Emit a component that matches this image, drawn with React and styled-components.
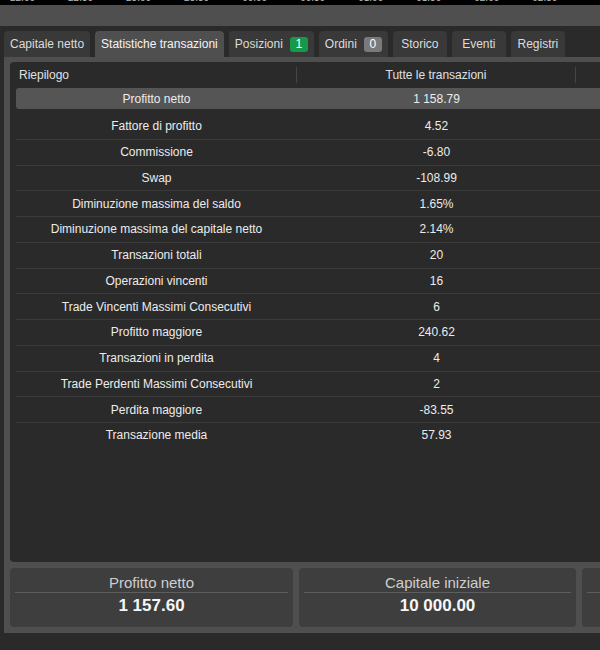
import React from 'react'
import styled, { createGlobalStyle } from 'styled-components'

const Global = createGlobalStyle`
  html, body {
    margin: 0;
    padding: 0;
    background: #2a2a2a;
    overflow: hidden;
  }
  body {
    font-family: "Liberation Sans", Arial, sans-serif;
    color: #e6e6e6;
  }
`

const Page = styled.div`
  width: 600px;
  height: 650px;
  overflow: hidden;
  background: #2a2a2a;
`

// chart time axis, only the bottom of its labels peeks out
const Ticker = styled.div`
  height: 5px;
  background: #000;
  overflow: hidden;
  display: flex;
  gap: 33px;
  padding-left: 10px;
  font-size: 10px;
  line-height: 10px;
  color: #bbb;

  span {
    display: block;
    transform: translateY(-7px);
  }
`

const TopBar = styled.div`
  height: 21px;
  background: #4f4f4f;
`

const Tabs = styled.div`
  display: flex;
  gap: 5px;
  padding: 5px 0 0 4px;
  height: 26px;
`

const Tab = styled.div`
  height: 26px;
  min-width: 54px;
  padding: 0 6px;
  display: flex;
  align-items: center;
  justify-content: center;
  gap: 7px;
  font-size: 12px;
  color: ${p => (p.active ? '#f4f4f4' : '#dcdcdc')};
  background: ${p => (p.active ? '#4f4f4f' : '#393939')};
  border-radius: 4px 4px 0 0;
  box-sizing: border-box;
  white-space: nowrap;
`

const Badge = styled.span`
  display: inline-block;
  min-width: 18px;
  height: 15px;
  line-height: 15px;
  text-align: center;
  border-radius: 3px;
  font-size: 12px;
  color: #fff;
  background: ${p => p.tone === 'green' ? '#16994a' : '#7a7a7a'};
`

const Panel = styled.div`
  width: 720px;
  margin-left: 4px;
  background: #4f4f4f;
  padding: 5px 6px 6px;
  box-sizing: border-box;
  display: flex;
  flex-direction: column;
  gap: 6px;
`

const TableBox = styled.div`
  height: 500px;
  background: #2a2a2a;
  border-radius: 4px;
  padding: 0 0 0 6px;
  box-sizing: border-box;
`

const HeaderRow = styled.div`
  display: grid;
  grid-template-columns: 281px 279px 1fr;
  height: 26px;
  align-items: center;
  font-size: 12px;
  color: #e0e0e0;
`

const HeadCell = styled.div`
  height: 16px;
  line-height: 16px;
  text-align: ${p => p.left ? 'left' : 'center'};
  padding-left: ${p => p.left ? '3px' : '0'};
  border-right: 1px solid #454545;
`

const Row = styled.div`
  display: grid;
  grid-template-columns: 281px 279px 1fr;
  align-items: center;
  font-size: 12px;
  color: #ececec;
  height: ${p => p.selected ? '21px' : '24.75px'};
  padding-top: ${p => p.selected ? '1px' : '0'};
  box-sizing: ${p => p.selected ? 'border-box' : 'content-box'};
  margin-bottom: ${p => p.selected ? '5px' : '0'};
  background: ${p => p.selected ? '#555555' : 'transparent'};
  border-radius: ${p => p.selected ? '3px' : '0'};
  border-bottom: ${p => p.selected || p.last ? 'none' : '1px solid #3b3b3b'};
`

const Cell = styled.div`
  text-align: center;
  white-space: nowrap;
`

const Cards = styled.div`
  display: grid;
  grid-template-columns: 283px 277px 277px;
  gap: 6px;
`

const Card = styled.div`
  height: 59px;
  background: #3e3e3e;
  border-radius: 4px;
  padding: 0 5px;
  box-sizing: border-box;
  display: flex;
  flex-direction: column;
  align-items: stretch;
`

const CardTitle = styled.div`
  height: 24px;
  line-height: 30px;
  text-align: center;
  font-size: 15px;
  color: #cfcfcf;
  border-bottom: 1px solid #5e5e5e;
`

const CardValue = styled.div`
  text-align: center;
  font-size: 17px;
  font-weight: bold;
  color: #f6f6f6;
  line-height: 26px;
`

const ticks = ['22:00', '22:30', '23:00', '23:30', '00:00', '00:30', '01:00', '01:30', '02:00', '02:30']

const tabs = [
  { label: 'Capitale netto' },
  { label: 'Statistiche transazioni', active: true },
  { label: 'Posizioni', badge: '1', tone: 'green' },
  { label: 'Ordini', badge: '0', tone: 'grey' },
  { label: 'Storico' },
  { label: 'Eventi' },
  { label: 'Registri' },
]

const rows = [
  ['Profitto netto', '1 158.79'],
  ['Fattore di profitto', '4.52'],
  ['Commissione', '-6.80'],
  ['Swap', '-108.99'],
  ['Diminuzione massima del saldo', '1.65%'],
  ['Diminuzione massima del capitale netto', '2.14%'],
  ['Transazioni totali', '20'],
  ['Operazioni vincenti', '16'],
  ['Trade Vincenti Massimi Consecutivi', '6'],
  ['Profitto maggiore', '240.62'],
  ['Transazioni in perdita', '4'],
  ['Trade Perdenti Massimi Consecutivi', '2'],
  ['Perdita maggiore', '-83.55'],
  ['Transazione media', '57.93'],
]

const cards = [
  ['Profitto netto', '1 157.60'],
  ['Capitale iniziale', '10 000.00'],
  ['', ''],
]

export default function App() {
  return (
    <Page>
      <Global />
      <Ticker>
        {ticks.map(t => <span key={t}>{t}</span>)}
      </Ticker>
      <TopBar />
      <Tabs>
        {tabs.map(t => (
          <Tab key={t.label} active={t.active}>
            {t.label}
            {t.badge && <Badge tone={t.tone}>{t.badge}</Badge>}
          </Tab>
        ))}
      </Tabs>
      <Panel>
        <TableBox>
          <HeaderRow>
            <HeadCell left>Riepilogo</HeadCell>
            <HeadCell>Tutte le transazioni</HeadCell>
            <div />
          </HeaderRow>
          {rows.map(([label, value], i) => (
            <Row key={label} selected={i === 0} last={i === rows.length - 1}>
              <Cell>{label}</Cell>
              <Cell>{value}</Cell>
              <Cell />
            </Row>
          ))}
        </TableBox>
        <Cards>
          {cards.map(([title, value], i) => (
            <Card key={i}>
              <CardTitle>{title}</CardTitle>
              <CardValue>{value}</CardValue>
            </Card>
          ))}
        </Cards>
      </Panel>
    </Page>
  )
}
